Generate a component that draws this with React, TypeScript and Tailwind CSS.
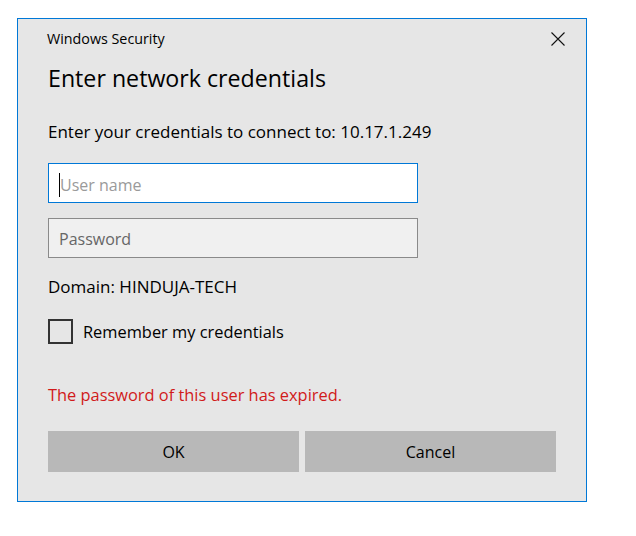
import { useState } from "react";

const App = () => {
	const [userName, setUserName] = useState("");
	const [password, setPassword] = useState("");
	const [remember, setRemember] = useState(false);

	return (
		<div className="min-h-[536px] w-[636px] bg-white pl-[17px] pt-[18px] font-['Segoe_UI','Open_Sans',sans-serif]">
			<div className="flex h-[484px] w-[570px] flex-col border border-[#0078d7] bg-[#e6e6e6] text-black">
				{/* Title bar */}
				<div className="flex items-center justify-between pl-[29px] pr-[20px] pt-[9px]">
					<span className="text-[14.3px] leading-[20px]">Windows Security</span>
					<button type="button" className="flex h-[22px] w-[16px] items-center justify-center">
						<svg width="14" height="14" viewBox="0 0 14 14" fill="none">
							<path d="M0.5 0.5L13.5 13.5M13.5 0.5L0.5 13.5" stroke="#111" strokeWidth="1.1" />
						</svg>
					</button>
				</div>

				<div className="flex flex-col pl-[30px] pr-[30px]">
					<h1 className="mt-[12px] text-[23.2px] leading-[32px]">Enter network credentials</h1>

					<p className="mt-[27px] text-[17px] leading-[22px]">
						Enter your credentials to connect to: 10.17.1.249
					</p>

					{/* User name */}
					<div className="mt-[20px] flex h-[40px] w-[370px] items-center border border-[#0078d7] bg-white pl-[10px] pt-[3px]">
						<span className="h-[24px] w-px bg-black" />
						<input
							type="text"
							value={userName}
							onChange={(e) => setUserName(e.target.value)}
							placeholder="User name"
							className="flex-1 bg-transparent text-[16px] outline-none placeholder:text-[#9a9a9a]"
						/>
					</div>

					{/* Password */}
					<div className="mt-[15px] flex h-[40px] w-[370px] items-center border border-[#8a8a8a] bg-[#f0f0f0] pl-[10px] pt-[1px]">
						<input
							type="password"
							value={password}
							onChange={(e) => setPassword(e.target.value)}
							placeholder="Password"
							className="flex-1 bg-transparent text-[16px] outline-none placeholder:text-[#666]"
						/>
					</div>

					<p className="mt-[18px] text-[17px] leading-[22px]">Domain: HINDUJA-TECH</p>

					<label className="mt-[21px] flex items-center gap-[10px]">
						<input
							type="checkbox"
							checked={remember}
							onChange={(e) => setRemember(e.target.checked)}
							className="h-[25px] w-[25px] appearance-none border-2 border-[#333] bg-transparent"
						/>
						<span className="text-[16.4px] leading-[22px]">Remember my credentials</span>
					</label>

					<p className="mt-[40px] text-[16.4px] leading-[22px] text-[#d11a1a]">
						The password of this user has expired.
					</p>

					<div className="mt-[25px] flex gap-[6px]">
						<button type="submit" className="h-[41px] flex-1 bg-[#b8b8b8] text-[16px]">
							OK
						</button>
						<button type="button" className="h-[41px] flex-1 bg-[#b8b8b8] text-[16px]">
							Cancel
						</button>
					</div>
				</div>
			</div>
		</div>
	);
};

export default App;
